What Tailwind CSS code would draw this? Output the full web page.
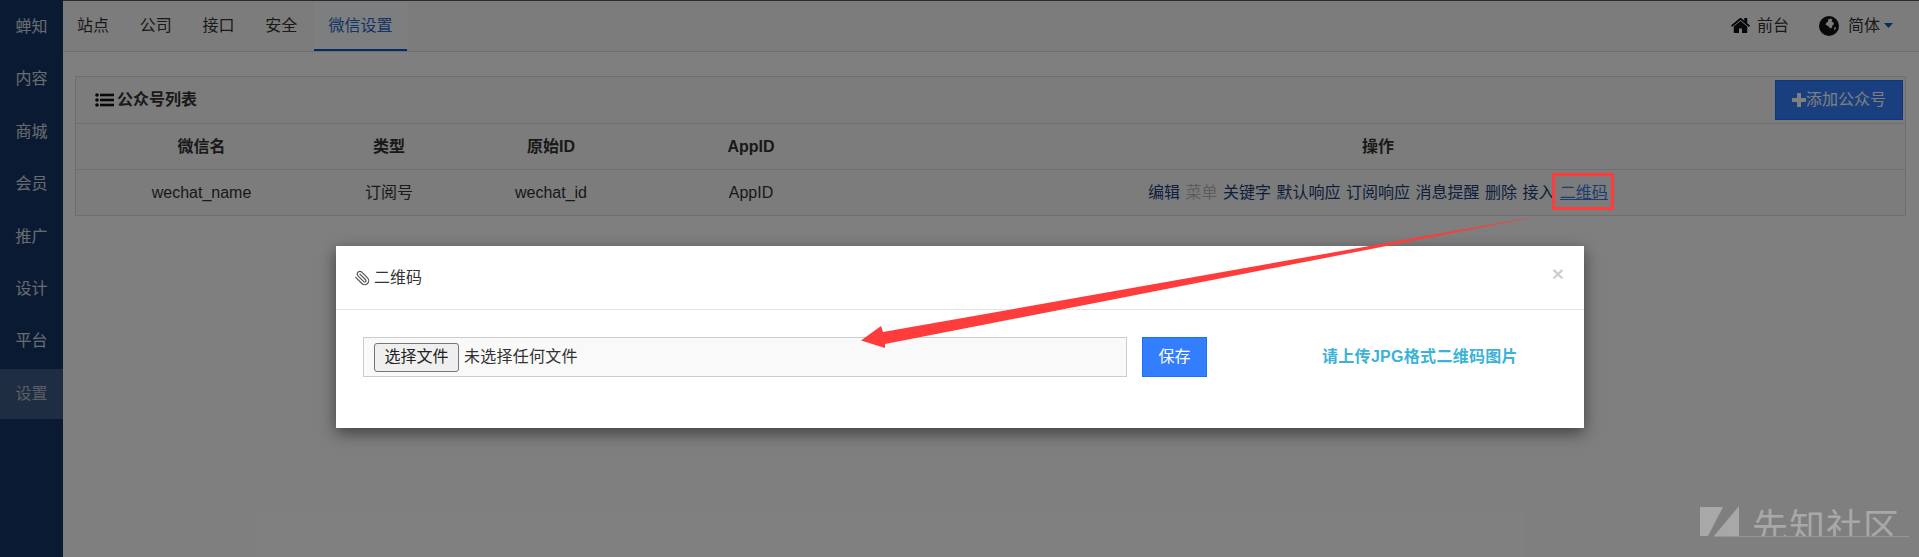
<!DOCTYPE html>
<html lang="zh-CN">
<head>
    <meta charset="UTF-8">
    <meta name="viewport" content="width=device-width, initial-scale=1.0">
    <title>微信设置</title>
    <script src="https://cdn.jsdelivr.net/npm/@tailwindcss/browser@4"></script>
</head>
<body class="bg-white overflow-hidden">
<div class="relative w-[1919px] h-[557px] overflow-hidden text-[16px] text-[#333] font-['Liberation_Sans','Noto_Sans_CJK_SC',sans-serif]">

    <div class="flex h-full">
        <!-- 左侧导航 -->
        <nav class="w-[63px] shrink-0 h-full bg-[#143566] text-white/80 flex flex-col gap-[2.4px] pt-[2px] text-center">
            <a class="h-[50px] leading-[50px]">蝉知</a>
            <a class="h-[50px] leading-[50px]">内容</a>
            <a class="h-[50px] leading-[50px]">商城</a>
            <a class="h-[50px] leading-[50px]">会员</a>
            <a class="h-[50px] leading-[50px]">推广</a>
            <a class="h-[50px] leading-[50px]">设计</a>
            <a class="h-[50px] leading-[50px]">平台</a>
            <a class="h-[50px] leading-[50px] bg-[#3e5a84] text-white/60">设置</a>
        </nav>

        <div class="flex-1 min-w-0">
            <!-- 顶部菜单 -->
            <header class="h-[52px] bg-[#f8f8f8] border-t border-b border-t-[#555] border-b-[#ddd] flex items-stretch justify-between">
                <div class="flex gap-[2.75px]">
                    <a class="w-[60px] text-center leading-[50px]">站点</a>
                    <a class="w-[60px] text-center leading-[50px]">公司</a>
                    <a class="w-[60px] text-center leading-[50px]">接口</a>
                    <a class="w-[60px] text-center leading-[50px]">安全</a>
                    <a class="w-[93px] h-[50px] text-center leading-[50px] bg-[#fafcff] text-[#2a68c8] border-b-2 border-[#0f56c4]">微信设置</a>
                </div>
                <div class="flex items-center pr-[26px] gap-[30px] pb-[1px]">
                    <span class="flex items-center gap-[6px]">
                        <svg class="w-[21px] h-[21px] text-[#111]" viewBox="0 0 1792 1792" fill="currentColor"><path d="M1472 992v480q0 26-19 45t-45 19h-384v-384h-256v384h-384q-26 0-45-19t-19-45v-480q0-1 .5-3t.5-3l575-474 575 474q1 2 1 6zm223-69l-62 74q-8 9-21 11h-3q-13 0-21-7l-692-577-692 577q-12 8-24 7-13-2-21-11l-62-74q-8-10-7-23.5t11-21.5l719-599q32-26 76-26t76 26l244 204v-195q0-14 9-23t23-9h192q14 0 23 9t9 23v408l219 182q10 8 11 21.5t-7 23.5z"/></svg>
                        前台
                    </span>
                    <span class="flex items-center">
                        <svg class="w-[20px] h-[20px] mr-[9px]" viewBox="0 0 20 20"><circle cx="10" cy="10" r="10" fill="#111"/><path d="M9 3.500l3-1 1.500 1.500-1 1.500 2 1 .5 2-1.500.5-.5 2.500-2 1-1-2-2-1-1.500-1 1-2 1.500-.5z" fill="#f8f8f8"/><path d="M15.500 11l1.500.5-1 2.500-1-.5z" fill="#f8f8f8"/></svg>
                        简体
                        <svg class="w-[9px] h-[5px] ml-[4px] text-[#0f56c4]" viewBox="0 0 9 5" fill="currentColor"><path d="M0 0h9L4.500 5z"/></svg>
                    </span>
                </div>
            </header>

            <!-- 公众号列表 -->
            <main class="pt-[24px] pl-[12px] pr-[13px]">
                <section class="border border-[#ddd] bg-[#f8f8f8]">
                    <div class="h-[47px] border-b border-[#ddd] flex items-center justify-between pl-[19px] pr-[2px]">
                        <h2 class="flex items-center gap-[3px] font-bold">
                            <svg class="w-[19px] h-[14px] text-[#111]" viewBox="0 0 19 14" fill="currentColor"><circle cx="2" cy="2" r="1.800"/><circle cx="2" cy="7" r="1.800"/><circle cx="2" cy="12" r="1.800"/><rect x="5" y="0.700" width="14" height="2.600"/><rect x="5" y="5.700" width="14" height="2.600"/><rect x="5" y="10.700" width="14" height="2.600"/></svg>
                            公众号列表
                        </h2>
                        <a class="w-[128px] h-[40px] bg-[#337eff] border border-[#1a6fff] text-white flex items-center justify-center">
                            <svg class="w-[14px] h-[14px]" viewBox="0 0 14 14" fill="currentColor"><path d="M5 0h4v5h5v4H9v5H5V9H0V5h5z"/></svg>
                            添加公众号
                        </a>
                    </div>
                    <div class="grid grid-cols-[251px_124px_200px_200px_1054px] h-[46px] items-center text-center font-bold border-b border-[#ddd]">
                        <span>微信名</span>
                        <span>类型</span>
                        <span>原始ID</span>
                        <span>AppID</span>
                        <span>操作</span>
                    </div>
                    <div class="grid grid-cols-[251px_124px_200px_200px_1054px] h-[45px] items-center text-center">
                        <span>wechat_name</span>
                        <span>订阅号</span>
                        <span>wechat_id</span>
                        <span>AppID</span>
                        <span class="text-[#1a3f7a] [word-spacing:1px]">
                            <a>编辑</a> <a class="text-[#bbb]">菜单</a> <a>关键字</a> <a>默认响应</a> <a>订阅响应</a> <a>消息提醒</a> <a>删除</a> <a>接入</a> <a class="text-[#3b78e7] underline">二维码</a>
                        </span>
                    </div>
                </section>
            </main>
        </div>
    </div>

    <!-- 遮罩 -->
    <div class="absolute inset-0 bg-black/50"></div>

    <!-- 上传二维码弹窗 -->
    <div class="absolute left-[336px] top-[246px] w-[1248px] h-[182px] bg-white shadow-[0_5px_15px_rgba(0,0,0,0.5)]">
        <div class="relative h-[64px] border-b border-[#e5e5e5] flex items-center pl-[18px] gap-[4px]">
            <svg class="w-[16px] h-[16px] -scale-x-100 text-[#555]" viewBox="0 0 24 24" fill="none" stroke="currentColor" stroke-width="1.800" stroke-linecap="round" stroke-linejoin="round"><path d="m21.440 11.050-9.190 9.190a6 6 0 0 1-8.490-8.490l8.570-8.570A4 4 0 1 1 18 8.840l-8.590 8.570a2 2 0 0 1-2.830-2.830l8.490-8.480"/></svg>
            二维码
            <span class="absolute right-[20px] top-[14px] text-[21px] font-bold leading-[28px] text-black/20">×</span>
        </div>
        <div class="flex pt-[27px] pl-[27px]">
            <div class="w-[764px] h-[40px] bg-[#f9f9f9] border border-[#ccc] flex items-center pl-[10px]">
                <button class="w-[85px] h-[29px] bg-[#efefef] border border-[#767676] rounded-[3px] text-[#222] text-center">选择文件</button>
                <span class="ml-[5px] tracking-[0.25px]">未选择任何文件</span>
            </div>
            <button class="w-[65px] h-[40px] ml-[15px] bg-[#337eff] border border-[#1a6fff] text-white">保存</button>
            <span class="ml-[115px] leading-[40px] font-bold tracking-[0.3px] text-[#3cb2d9]">请上传JPG格式二维码图片</span>
        </div>
    </div>

    <!-- 截图标注 -->
    <svg class="absolute inset-0 w-full h-full pointer-events-none" viewBox="0 0 1919 557">
        <rect x="1553.500" y="174.500" width="59" height="34" fill="none" stroke="#ff3b3b" stroke-width="3"/>
        <path d="M861 340.500L881 326L883 332L1545 215L885 344L885 348Z" fill="#ff3b3b"/>
    </svg>

    <!-- 水印 -->
    <div class="absolute left-[1700px] top-[506px] w-[205px] h-[30px] overflow-hidden flex text-[#a8a8a8]">
        <svg class="w-[39px] h-[30px] shrink-0" viewBox="0 0 39 30" fill="currentColor"><path d="M0 1h23L8 30H0z"/><path d="M39 0v30H14z"/></svg>
        <span class="ml-[13px] -mt-[5px] text-[36px] leading-[54px] tracking-[1px] whitespace-nowrap">先知社区</span>
    </div>
    <div class="absolute left-[1714px] top-[536px] w-[195px] h-px bg-[#8e9a8a]"></div>
</div>
</body>
</html>
